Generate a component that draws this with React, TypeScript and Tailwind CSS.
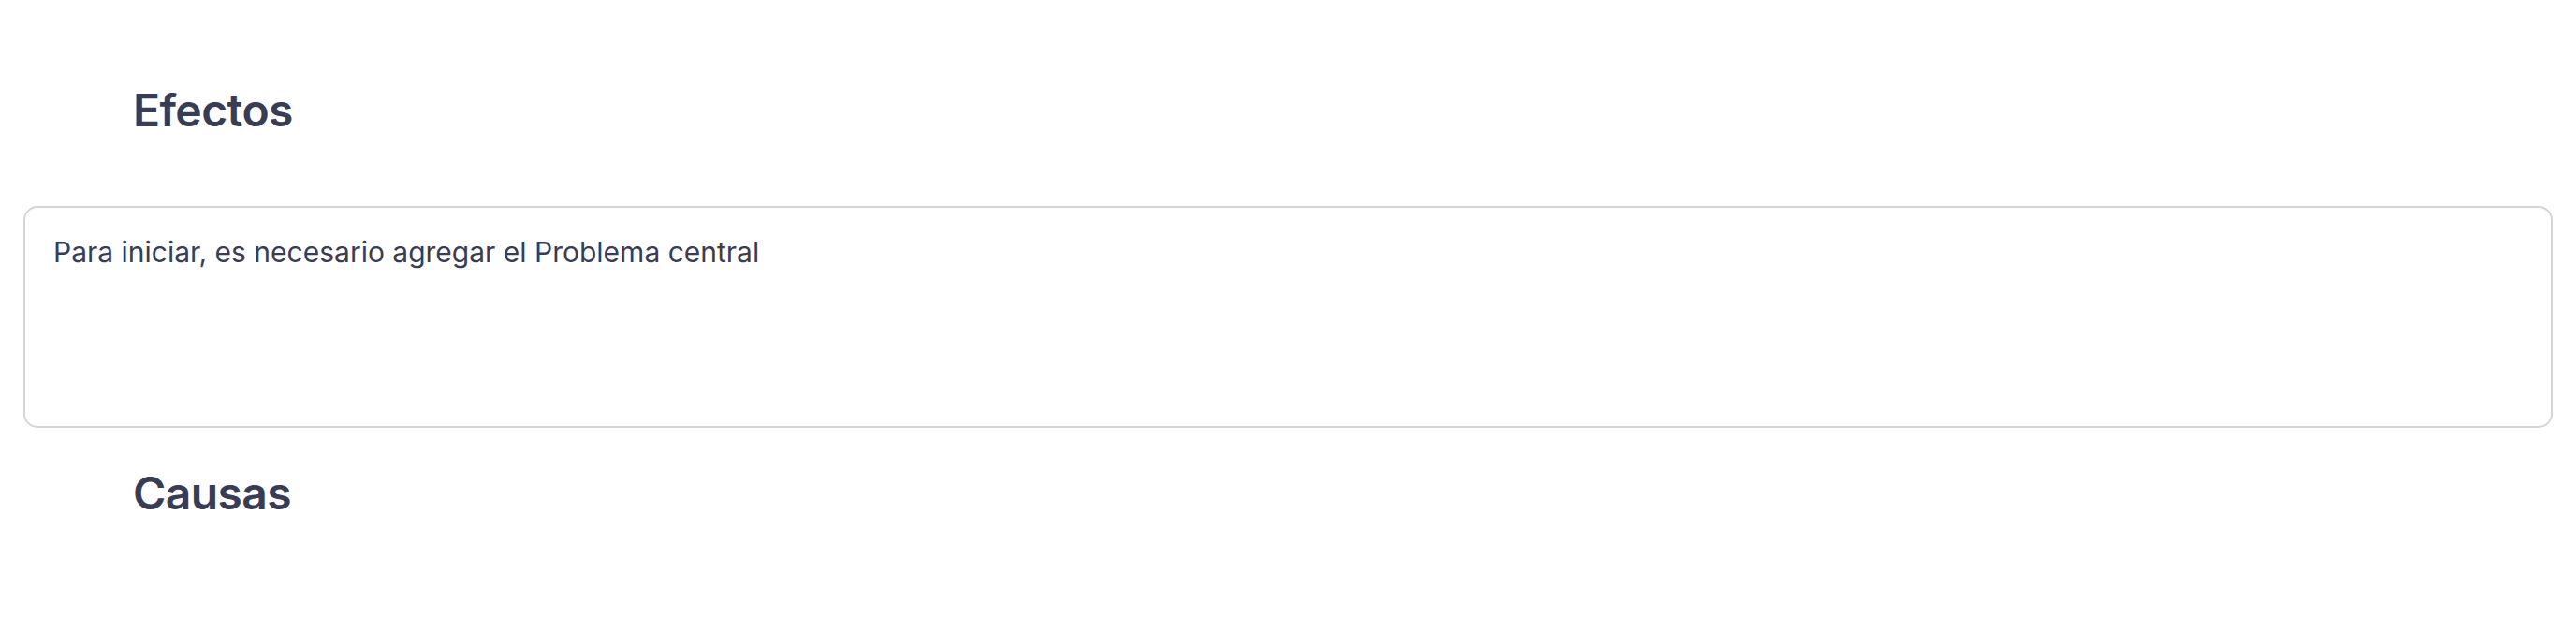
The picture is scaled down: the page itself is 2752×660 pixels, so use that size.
export default function App() {
  return (
    <div className="min-h-[660px] w-full bg-white font-['Inter',sans-serif] text-[#383d55]">
      <div className="px-[25px] pt-[94px]">
        <h2 className="pl-[117px] text-[48px] font-semibold leading-[48px] tracking-[-0.6px]">
          Efectos
        </h2>

        <div className="mt-[78px] h-[237px] rounded-[15px] border-2 border-[#d4d4d9] px-[30px] pt-[32px]">
          <p className="text-[30px] leading-[30px]">
            Para iniciar, es necesario agregar el Problema central
          </p>
        </div>

        <h2 className="mt-[46px] pl-[117px] text-[48px] font-semibold leading-[48px] tracking-[-0.6px]">
          Causas
        </h2>
      </div>
    </div>
  );
}
